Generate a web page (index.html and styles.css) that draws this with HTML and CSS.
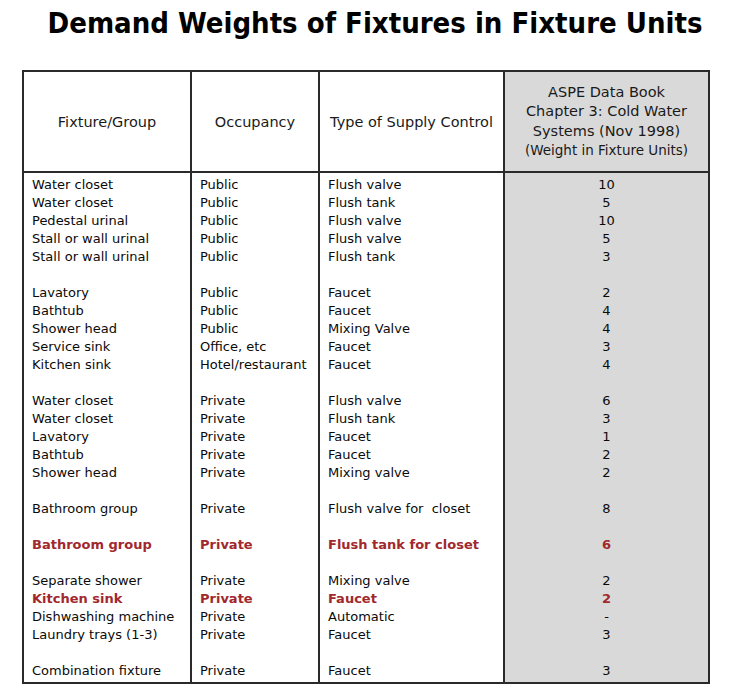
FILE: index.html
```html
<!DOCTYPE html>
<html>
<head>
<meta charset="utf-8">
<link rel="stylesheet" href="styles.css">
</head>
<body>
<h1 class="title">Demand Weights of Fixtures in Fixture Units</h1>
<table class="fu-table">
  <colgroup>
    <col class="c1"><col class="c2"><col class="c3"><col class="c4">
  </colgroup>
  <thead>
    <tr>
      <th>Fixture/Group</th>
      <th>Occupancy</th>
      <th>Type of Supply Control</th>
      <th class="aspe">ASPE Data Book<br>Chapter 3: Cold Water<br>Systems (Nov 1998)<br><span class="small">(Weight in Fixture Units)</span></th>
    </tr>
  </thead>
  <tbody>
    <tr class="first"><td>Water closet</td><td>Public</td><td>Flush valve</td><td class="num">10</td></tr>
    <tr><td>Water closet</td><td>Public</td><td>Flush tank</td><td class="num">5</td></tr>
    <tr><td>Pedestal urinal</td><td>Public</td><td>Flush valve</td><td class="num">10</td></tr>
    <tr><td>Stall or wall urinal</td><td>Public</td><td>Flush valve</td><td class="num">5</td></tr>
    <tr><td>Stall or wall urinal</td><td>Public</td><td>Flush tank</td><td class="num">3</td></tr>
    <tr class="blank"><td></td><td></td><td></td><td class="num"></td></tr>
    <tr><td>Lavatory</td><td>Public</td><td>Faucet</td><td class="num">2</td></tr>
    <tr><td>Bathtub</td><td>Public</td><td>Faucet</td><td class="num">4</td></tr>
    <tr><td>Shower head</td><td>Public</td><td>Mixing Valve</td><td class="num">4</td></tr>
    <tr><td>Service sink</td><td>Office, etc</td><td>Faucet</td><td class="num">3</td></tr>
    <tr><td>Kitchen sink</td><td>Hotel/restaurant</td><td>Faucet</td><td class="num">4</td></tr>
    <tr class="blank"><td></td><td></td><td></td><td class="num"></td></tr>
    <tr><td>Water closet</td><td>Private</td><td>Flush valve</td><td class="num">6</td></tr>
    <tr><td>Water closet</td><td>Private</td><td>Flush tank</td><td class="num">3</td></tr>
    <tr><td>Lavatory</td><td>Private</td><td>Faucet</td><td class="num">1</td></tr>
    <tr><td>Bathtub</td><td>Private</td><td>Faucet</td><td class="num">2</td></tr>
    <tr><td>Shower head</td><td>Private</td><td>Mixing valve</td><td class="num">2</td></tr>
    <tr class="blank"><td></td><td></td><td></td><td class="num"></td></tr>
    <tr><td>Bathroom group</td><td>Private</td><td>Flush valve for&nbsp; closet</td><td class="num">8</td></tr>
    <tr class="blank"><td></td><td></td><td></td><td class="num"></td></tr>
    <tr class="hl"><td>Bathroom group</td><td>Private</td><td>Flush tank for closet</td><td class="num">6</td></tr>
    <tr class="blank"><td></td><td></td><td></td><td class="num"></td></tr>
    <tr><td>Separate shower</td><td>Private</td><td>Mixing valve</td><td class="num">2</td></tr>
    <tr class="hl"><td>Kitchen sink</td><td>Private</td><td>Faucet</td><td class="num">2</td></tr>
    <tr><td>Dishwashing machine</td><td>Private</td><td>Automatic</td><td class="num">-</td></tr>
    <tr><td>Laundry trays (1-3)</td><td>Private</td><td>Faucet</td><td class="num">3</td></tr>
    <tr class="blank"><td></td><td></td><td></td><td class="num"></td></tr>
    <tr class="last"><td>Combination fixture</td><td>Private</td><td>Faucet</td><td class="num">3</td></tr>
  </tbody>
</table>
</body>
</html>
```
FILE: styles.css
```css
html, body {
  margin: 0;
  padding: 0;
  background: #ffffff;
}
body {
  font-family: "DejaVu Sans", Verdana, sans-serif;
  color: #0a0a0a;
}
.title {
  margin: 0;
  padding-top: 5px;
  height: 70px;
  box-sizing: border-box;
  text-align: center;
  font-family: "DejaVu Sans Condensed", "DejaVu Sans", sans-serif;
  font-weight: bold;
  font-size: 29px;
  line-height: 36px;
  color: #000000;
}
.fu-table {
  margin-left: 22px;
  width: 686px;
  border-collapse: collapse;
  table-layout: fixed;
  border: 2px solid #2a2a2a;
  font-size: 13px;
}
.c1 { width: 168px; }
.c2 { width: 128px; }
.c3 { width: 185px; }
.c4 { width: 205px; }
.fu-table th {
  height: 99px;
  font-weight: normal;
  font-size: 14.5px;
  line-height: 20px;
  text-align: center;
  vertical-align: middle;
  border: 2px solid #2a2a2a;
  padding: 0;
  color: #1a1a1a;
}
.fu-table th.aspe {
  background: #d9d9d9;
  line-height: 19.5px;
}
.small {
  font-size: 13.5px;
}
.fu-table td {
  height: 18px;
  line-height: 18px;
  padding: 0 0 0 8px;
  border-left: 2px solid #2a2a2a;
  border-right: 2px solid #2a2a2a;
  white-space: nowrap;
  vertical-align: middle;
}
.fu-table td.num {
  background: #d9d9d9;
  text-align: center;
  padding: 0;
}
.fu-table tr.first td {
  padding-top: 3px;
}
.fu-table tr.last td {
  padding-bottom: 2px;
}
.fu-table tr.hl td {
  color: #a1282d;
  font-weight: bold;
}
```
